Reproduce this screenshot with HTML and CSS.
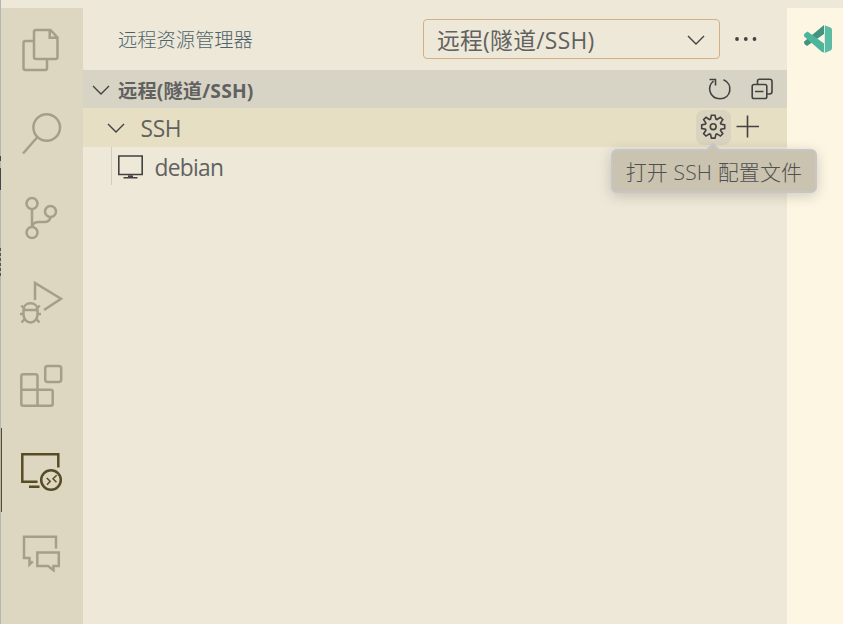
FILE: index.html
```html
<!DOCTYPE html>
<html lang="zh-CN">
<head>
<meta charset="utf-8">
<title>远程资源管理器</title>
<link rel="stylesheet" href="styles.css">
</head>
<body>
<div class="window">
  <div class="edge"></div>
  <nav class="activity">
    <a class="item"><svg viewBox="1 8 82 84"><path d="M36 30H50.500L57.500 37.500V57Q57.500 59 55.500 59H36Q34 59 34 57V32Q34 30 36 30ZM49.700 31V37.800H57M33 41H25.500Q23.500 41 23.500 43V68Q23.500 70 25.500 70H45Q47 70 47 68V60"/></svg></a>
    <a class="item"><svg viewBox="1 92 82 84"><circle cx="46.700" cy="127.500" r="13.300"/><path d="M37.500 137L23 153.500"/></svg></a>
    <a class="item"><svg viewBox="1 176 82 84"><circle cx="32" cy="203.500" r="5.500"/><circle cx="50.500" cy="211.500" r="5.500"/><circle cx="32" cy="232.500" r="5.500"/><path d="M32 209V227M50.500 217C50 220 48 222 44.500 222H38.500C35 222 32.500 224 32 227"/></svg></a>
    <a class="item"><svg viewBox="1 260 82 84"><path d="M35 300V283L61 298.700L44 310"/><path d="M23.500 310H37.500M23.500 310V314.500A7 8 0 0 0 37.500 314.500V310C37.500 306 34.500 303.300 30.500 303.300S23.500 306 23.500 310ZM20 314H23.500M37.500 314H41M21.300 305.500L24.500 309M39.700 305.500L36.500 309M21.500 322.500L25 318.700M39.500 322.500L36 318.700"/></svg></a>
    <a class="item"><svg viewBox="1 344 82 84"><rect x="45.200" y="366" width="16" height="16" rx="2.500"/><path d="M23.300 374.300H35.500Q37.500 374.300 37.500 376.300V389.700H50.700Q52.700 389.700 52.700 391.700V403.700Q52.700 405.700 50.700 405.700H23.300Q21.300 405.700 21.300 403.700V376.300Q21.300 374.300 23.300 374.300ZM21.300 389.700H37.500V405.700"/></svg></a>
    <a class="item active"><svg viewBox="1 428 82 84"><path d="M58.300 467.500V454.200H22.300V481.800H37.500M29 486.700H39.500"/><circle cx="51" cy="480" r="9.800"/><path class="fine" d="M46.700 478L50.200 481.300L47 484.700M56.700 475.200L53 478.700L56.500 482.200"/></svg></a>
    <a class="item"><svg viewBox="1 512 82 84"><path d="M56 548.500V536.700H24V558H29.500V564.500L32.800 561.300M37.300 552.600H58.800V566H53.500V570.300L48 566H37.300Z"/></svg></a>
  </nav>
  <main class="sidebar">
    <header class="titlebar">
      <h1>远程资源管理器</h1>
      <div class="select"><span>远程(隧道/SSH)</span><svg class="chev" viewBox="0 0 18 10"><path d="M1 1L9 9L17 1"/></svg></div>
      <svg class="more" viewBox="0 0 24 6"><circle cx="3" cy="3" r="1.900"/><circle cx="11.800" cy="3" r="1.900"/><circle cx="20.500" cy="3" r="1.900"/></svg>
    </header>
    <div class="section">
      <svg class="chev" viewBox="0 0 18 10"><path d="M1 1L9 9L17 1"/></svg>
      <b>远程(隧道/SSH)</b>
      <svg class="tools" viewBox="704 74 72 30"><path d="M709.500 79.500H715.500V85.500M713.500 81C706.500 87 709.500 98.700 720 98.700C731.300 98.700 733.500 84 723.500 79.700"/><rect x="752.200" y="84.500" width="14.600" height="14" rx="1.800"/><path d="M757.500 84V81.300Q757.500 79.300 759.500 79.300H769.700Q772 79.300 772 81.500V91.500Q772 94 769.500 94H767M755 91.500H763.500"/></svg>
    </div>
    <div class="row selected">
      <svg class="chev" viewBox="0 0 18 10"><path d="M1 1L9 9L17 1"/></svg>
      <span>SSH</span>
      <div class="gear"><svg viewBox="-17.200 -16.700 35 35"><path d="M-1.800 -11.400H1.800L2.700 -7.600L3.800 -7.200L7.200 -9.400L9.600 -7L7.300 -3.600L7.700 -2.600L11.500 -1.800V1.800L7.700 2.600L7.300 3.600L9.600 7L7.200 9.400L3.800 7.200L2.700 7.600L1.800 11.400H-1.800L-2.700 7.600L-3.800 7.200L-7.200 9.400L-9.600 7L-7.300 3.600L-7.700 2.600L-11.500 1.800V-1.800L-7.700 -2.600L-7.300 -3.600L-9.600 -7L-7.200 -9.400L-3.800 -7.200L-2.700 -7.600Z"/><circle r="2.900"/></svg>
        <div class="tooltip"><svg viewBox="0 0 16 9"><path d="M1 8L8 1L15 8"/></svg><span>打开 SSH 配置文件</span></div>
      </div>
      <svg class="plus" viewBox="0 0 24 24"><path d="M.5 11.500H23M11.500 .5V22.500"/></svg>
    </div>
    <div class="row child">
      <svg class="host" viewBox="117 154 28 26"><path d="M118.800 156H142.200V174.500H118.800ZM123.500 177.700H137.500M128 176.200H133"/></svg>
      <span>debian</span>
    </div>
  </main>
  <aside class="editor">
    <svg viewBox="804 25 28 28"><path fill="#419580" d="M824 25L804.200 41.500Q803.500 43 805 44.500L807 46L824 34Z"/><path fill="#4eb59d" d="M804.200 36.500Q803.600 34.500 805 33.300L807.500 31.500L824 43.500V52.500L822 52Z"/><path fill="#5bbca6" d="M824.800 25.200L831 27.800Q832 28.500 832 30V48Q832 49.500 831 50.200L824.800 53Z"/></svg>
  </aside>
</div>
</body>
</html>
```
FILE: styles.css
```css
* { box-sizing: border-box; }
body {
  margin: 0;
  background: #eee8d8;
  color: #616161;
  font-family: "Open Sans", "Noto Sans CJK SC", sans-serif;
  overflow: hidden;
}
svg { display: block; flex: none; fill: none; stroke: #424242; stroke-width: 1.6; }
.window { display: flex; height: 624px; }
.edge {
  width: 1px;
  background:
    repeating-linear-gradient(#55555a 0 3px, #b5b5b8 3px 5px) 0 248px / 1px 30px no-repeat,
    linear-gradient(#b5b5b8 156px, #46464e 156px 161px, #b5b5b8 161px 168px, #46464e 168px 190px, #b5b5b8 190px);
}
.activity { width: 82px; margin-top: 8px; background: #ddd6c1; }
.item { display: block; height: 84px; }
.item svg { width: 82px; height: 84px; stroke: #a69f87; stroke-width: 2.5; }
.item.active { box-shadow: inset 1px 0 #584c27; }
.item.active svg { stroke: #584c27; }
.item .fine { stroke-width: 1.500; }
.sidebar { width: 704px; padding-top: 8px; }
.titlebar { height: 62px; display: flex; align-items: center; padding-left: 35px; }
h1 { margin: 0; padding-top: 1px; width: 305px; font-size: 19.25px; font-weight: 300; color: #4d636b; line-height: 28px; }
.select {
  width: 297px; height: 40px; padding: 0 14.500px 0 13px;
  display: flex; align-items: center; justify-content: space-between;
  border: 1px solid #d3af86; border-radius: 4px;
  font-size: 22.75px; line-height: 32px;
}
.select span { padding-top: 3px; letter-spacing: .3px; }
.chev { width: 18px; height: 10px; stroke-width: 1.4; }
.select .chev { margin-top: 2px; }
.more { width: 24px; height: 6px; margin-left: 14px; fill: #424242; stroke: none; }
.section { height: 38px; display: flex; align-items: center; padding: 0 11px 0 8.500px; background: #d8d4c5; }
.section .chev { margin-top: 2px; }
.section b { margin: 0 auto 0 8.500px; padding-top: 3px; font-size: 19.25px; line-height: 28px; letter-spacing: .15px; }
.tools { width: 72px; height: 30px; }
.row { height: 39px; display: flex; align-items: center; font-size: 22.75px; line-height: 32px; }
.selected { padding-left: 24px; background: #e7dfc3; }
.selected > span { margin-left: 15.500px; margin-right: auto; padding-top: 2px; letter-spacing: -.3px; }
.gear { position: relative; width: 35px; height: 35px; border-radius: 8px; background: #d9d3bf; }
.gear > svg { width: 35px; height: 35px; }
.plus { width: 24px; height: 24px; margin: 0 27.500px 2px 4.500px; }
.child { height: 38px; margin-left: 28px; padding-left: 5px; border-left: 1px solid #d0ccbf; }
.host { width: 28px; height: 26px; margin-top: 1px; }
.child span { margin-left: 9.500px; padding-top: 3px; letter-spacing: -.7px; }
.tooltip {
  position: absolute; left: -85px; top: 39px; width: 206px; height: 44px;
  display: flex; align-items: center; justify-content: center;
  border: 2px solid #c6c6c8; border-radius: 6px; background: #cac3af;
  box-shadow: 0 3px 14px rgba(0, 0, 0, .18);
  font-size: 21px; line-height: 30px; white-space: nowrap;
}
.tooltip span { padding-top: 2px; font-weight: 300; color: #505050; letter-spacing: .15px; }
.tooltip svg { position: absolute; left: 92px; top: -8px; width: 16px; height: 9px; fill: #cac3af; stroke: #c6c6c8; stroke-width: 2; }
.editor { flex: 1; margin-top: 8px; padding: 17px 0 0 17px; background: #fdf6e3; }
.editor svg { width: 28px; height: 28px; stroke: none; }
```
